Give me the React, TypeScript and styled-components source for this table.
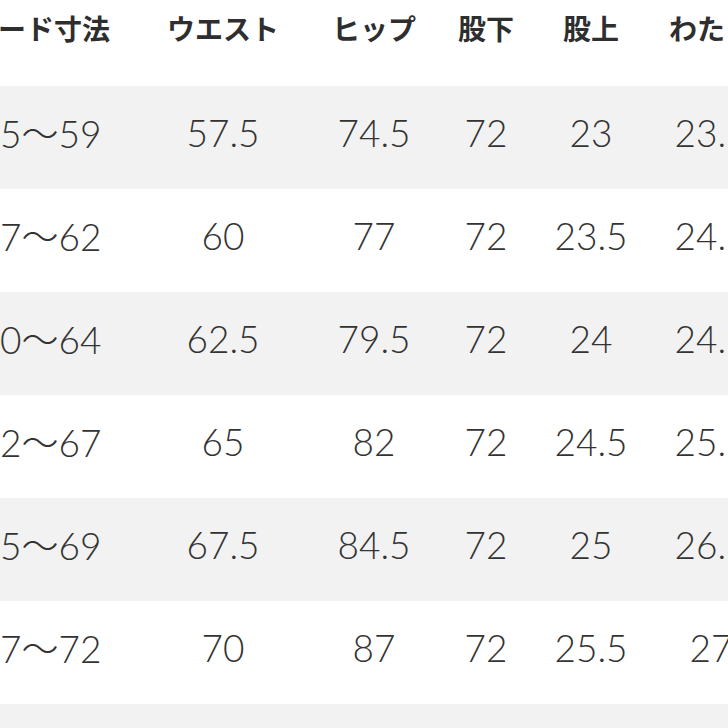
import * as React from "react"
import styled, { createGlobalStyle } from "styled-components"

const GlobalStyle = createGlobalStyle`
  html, body {
    margin: 0;
    padding: 0;
    background: #ffffff;
  }
`

const columns = [
  { key: "nude", title: "ヌード寸法", width: 220 },
  { key: "waist", title: "ウエスト", width: 146 },
  { key: "hip", title: "ヒップ", width: 156 },
  { key: "inseam", title: "股下", width: 68 },
  { key: "rise", title: "股上", width: 142 },
  { key: "thigh", title: "わたり", width: 98 },
]

const rows = [
  ["55〜59", "57.5", "74.5", "72", "23", "23.5"],
  ["57〜62", "60", "77", "72", "23.5", "24.2"],
  ["60〜64", "62.5", "79.5", "72", "24", "24.9"],
  ["62〜67", "65", "82", "72", "24.5", "25.6"],
  ["65〜69", "67.5", "84.5", "72", "25", "26.3"],
  ["67〜72", "70", "87", "72", "25.5", "27"],
  ["70〜74", "72.5", "89.5", "72", "26", "27.7"],
]

const Styled = {
  Viewport: styled.div`
    width: 728px;
    height: 728px;
    overflow: hidden;
    background: #ffffff;
  `,
  Table: styled.table`
    border-collapse: collapse;
    table-layout: fixed;
    margin-left: -70px;
    width: 830px;
  `,
  HeadCell: styled.th`
    height: 86px;
    padding: 9px 0 0;
    box-sizing: border-box;
    vertical-align: top;
    text-align: center;
    font-family: "Noto Sans CJK JP", "Noto Sans", sans-serif;
    font-weight: 700;
    font-size: 28px;
    line-height: 38px;
    color: #2e2e2e;
    white-space: nowrap;
  `,
  Row: styled.tr<{ $shaded: boolean }>`
    background: ${(p) => (p.$shaded ? "#f2f2f2" : "#ffffff")};
  `,
  Cell: styled.td`
    height: 103px;
    padding: 0 0 11px;
    box-sizing: border-box;
    text-align: center;
    vertical-align: middle;
    font-family: Lato, "Noto Sans CJK JP", sans-serif;
    font-weight: 300;
    font-size: 37px;
    color: #333333;
    white-space: nowrap;
  `,
}

export default function App() {
  return (
    <>
      <GlobalStyle />
      <Styled.Viewport>
        <Styled.Table>
          <colgroup>
            {columns.map((c) => (
              <col key={c.key} style={{ width: c.width }} />
            ))}
          </colgroup>
          <thead>
            <tr>
              {columns.map((c) => (
                <Styled.HeadCell key={c.key}>{c.title}</Styled.HeadCell>
              ))}
            </tr>
          </thead>
          <tbody>
            {rows.map((row, i) => (
              <Styled.Row key={i} $shaded={i % 2 === 0}>
                {row.map((v, j) => (
                  <Styled.Cell key={j}>{v}</Styled.Cell>
                ))}
              </Styled.Row>
            ))}
          </tbody>
        </Styled.Table>
      </Styled.Viewport>
    </>
  )
}
